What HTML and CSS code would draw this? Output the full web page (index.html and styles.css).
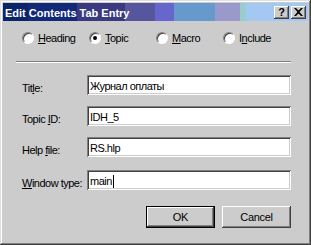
FILE: index.html
```html
<!DOCTYPE html>
<html lang="en">
<head>
  <meta charset="UTF-8" />
  <title>Edit Contents Tab Entry</title>
  <link rel="stylesheet" href="styles.css">
</head>
<body>
  <div class="dialog">
    <div class="titlebar">
      <span class="title">Edit Contents Tab Entry</span>
      <div class="caption-buttons">
        <span class="cap-btn help">?</span>
        <span class="cap-btn">
          <svg width="9" height="8" viewBox="0 0 9 8">
            <path d="M0 0h2l2.5 2.5L7 0h2L5.5 4 9 8H7L4.5 5.5 2 8H0l3.5-4z" fill="#000"/>
          </svg>
        </span>
      </div>
    </div>

    <div class="content">
      <!-- Tipo de entrada -->
      <div class="radios">
        <div class="radio"><span class="circle"></span><span><u>H</u>eading</span></div>
        <div class="radio"><span class="circle checked"></span><span><u>T</u>opic</span></div>
        <div class="radio"><span class="circle"></span><span><u>M</u>acro</span></div>
        <div class="radio"><span class="circle"></span><span>I<u>n</u>clude</span></div>
      </div>

      <div class="separator"></div>

      <!-- Campos -->
      <div class="fields">
        <div class="field">
          <span class="label">Tit<u>l</u>e:</span>
          <div class="input">Журнал оплаты</div>
        </div>
        <div class="field">
          <span class="label">Topic <u>I</u>D:</span>
          <div class="input">IDH_5</div>
        </div>
        <div class="field">
          <span class="label">Help <u>f</u>ile:</span>
          <div class="input">RS.hlp</div>
        </div>
        <div class="field last">
          <span class="label"><u>W</u>indow type:</span>
          <div class="input">main<span class="caret"></span></div>
        </div>
      </div>

      <div class="buttons">
        <div class="btn default"><span>OK</span></div>
        <div class="btn"><span>Cancel</span></div>
      </div>
    </div>
  </div>
</body>
</html>
```

FILE: styles.css
```css
* {
  margin: 0;
  padding: 0;
  box-sizing: border-box;
}

body {
  font-family: 'Liberation Sans', Arial, sans-serif;
  font-size: 11px;
  letter-spacing: -0.5px;
  color: #000;
  background: #cccccc;
}

.dialog {
  width: 311px;
  height: 245px;
  background: #cccccc;
  padding: 3px;
  box-shadow: inset -1px -1px #404040, inset 1px 1px #dfdfdf,
              inset -2px -2px #808080, inset 2px 2px #ffffff;
}

.titlebar {
  height: 18px;
  display: flex;
  align-items: center;
  justify-content: space-between;
  padding: 0 2px 0 2px;
  background: linear-gradient(90deg,
    #0a246a 0, #0a246a 25px,
    #12297a 25px, #12297a 74px,
    #3a3a80 74px, #3a3a80 122px,
    #56569e 122px, #56569e 152px,
    #6666cc 152px, #6666cc 171px,
    #6699cc 171px, #6699cc 212px,
    #9999cc 212px, #9999cc 237px,
    #99cccc 237px, #99cccc 243px,
    #a3c9f2 243px);
}

.title {
  color: #fff;
  font-weight: bold;
  letter-spacing: 0;
  padding-top: 1px;
}

.caption-buttons {
  display: flex;
  gap: 2px;
}

.cap-btn {
  width: 15px;
  height: 13px;
  background: #cccccc;
  display: flex;
  justify-content: center;
  align-items: center;
  box-shadow: inset -1px -1px #404040, inset 1px 1px #ffffff, inset -2px -2px #808080;
  font-weight: bold;
  font-size: 11px;
  letter-spacing: 0;
  line-height: 1;
}

.content {
  padding: 11px 17px 0 13px;
}

.radios {
  display: flex;
  padding-left: 6px;
  height: 12px;
}

.radio {
  width: 67px;
  display: flex;
  align-items: center;
  gap: 4px;
}

.circle {
  width: 12px;
  height: 12px;
  border-radius: 50%;
  background: #fff;
  border: 1px solid;
  border-color: #808080 #ffffff #ffffff #808080;
  box-shadow: inset 1px 1px #404040;
  display: flex;
  justify-content: center;
  align-items: center;
  flex-shrink: 0;
}

.circle.checked::after {
  content: "";
  width: 4px;
  height: 4px;
  border-radius: 50%;
  background: #000;
}

.separator {
  margin-top: 17px;
  height: 2px;
  border-top: 1px solid #808080;
  border-bottom: 1px solid #ffffff;
}

.fields {
  margin-top: 12px;
  display: flex;
  flex-direction: column;
  gap: 11px;
}

.field {
  display: flex;
  align-items: flex-start;
}

.field.last {
  margin-top: 2px;
}

.label {
  width: 71px;
  padding: 7px 0 0 6px;
  line-height: 13px;
}

.input {
  flex: 1;
  height: 20px;
  background: #fff;
  padding: 2px 3px 0;
  line-height: 14px;
  box-shadow: inset 1px 1px #808080, inset -1px -1px #ffffff,
              inset 2px 2px #404040, inset -2px -2px #cccccc;
  display: flex;
  align-items: center;
}

.caret {
  width: 1px;
  height: 13px;
  background: #000;
  margin-left: 1px;
}

.buttons {
  margin-top: 16px;
  display: flex;
  justify-content: flex-end;
  gap: 7px;
}

.btn {
  width: 69px;
  height: 22px;
  display: flex;
  justify-content: center;
  align-items: center;
  box-shadow: inset -1px -1px #404040, inset 1px 1px #ffffff, inset -2px -2px #808080;
  letter-spacing: -0.3px;
}

.btn.default {
  box-shadow: inset 0 0 0 1px #000, inset -2px -2px #404040, inset 2px 2px #ffffff, inset -3px -3px #808080;
}
```
